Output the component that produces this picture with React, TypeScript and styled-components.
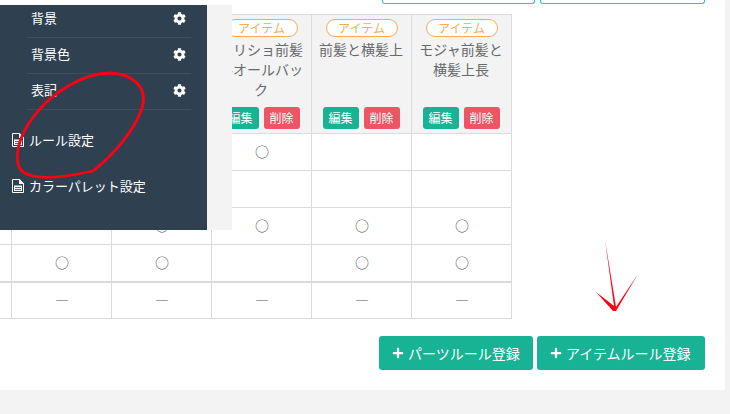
import React from 'react';
import styled, { createGlobalStyle } from 'styled-components';
import { FaCog, FaPlus } from 'react-icons/fa';

const GlobalStyle = createGlobalStyle`
  html, body {
    margin: 0;
    padding: 0;
    overflow: hidden;
    background: #f3f3f4;
    font-family: "Noto Sans CJK JP", "Open Sans", sans-serif;
    font-size: 14px;
    color: #676a6c;
  }
`;

const Page = styled.div`
  position: relative;
  width: 730px;
  height: 414px;
  overflow: hidden;
`;

const Panel = styled.main`
  width: 725px;
  height: 390px;
  background: #fff;
  overflow: hidden;
`;

const TopBar = styled.div`
  display: flex;
  justify-content: flex-end;
  gap: 5px;
  height: 4px;
  padding-right: 20px;
  margin-bottom: 10px;
`;

const CutButton = styled.div<{ $width: number }>`
  width: ${(p) => p.$width}px;
  box-sizing: border-box;
  border: 1px solid #23c6c8;
  border-top: none;
  border-radius: 0 0 3px 3px;
`;

const Table = styled.table`
  table-layout: fixed;
  border-collapse: collapse;
  width: 511px;
`;

const HeadCell = styled.th`
  height: 118px;
  padding: 0;
  background: #f3f3f3;
  border: 1px solid #dcdcdc;
  font-weight: 400;
  vertical-align: top;
  &:first-child {
    border-left: none;
  }
`;

const HeadInner = styled.div`
  display: flex;
  flex-direction: column;
  align-items: center;
  box-sizing: border-box;
  height: 118px;
  padding: 4px 7px;
`;

const Badge = styled.span`
  box-sizing: border-box;
  width: 72px;
  height: 18px;
  margin-left: 1px;
  border: 1px solid #f8ac59;
  border-radius: 9px;
  background: #fff;
  color: #f8ac59;
  font-size: 12px;
  line-height: 16px;
  text-align: center;
`;

const PartName = styled.div`
  margin-top: 2px;
  font-size: 14px;
  line-height: 20px;
  text-align: center;
  color: #676a6c;
`;

const HeadActions = styled.div`
  display: flex;
  gap: 5px;
  margin-top: auto;
`;

const SmallButton = styled.button<{ $danger?: boolean }>`
  width: 36px;
  height: 22px;
  padding: 0;
  border: none;
  border-radius: 3px;
  background: ${(p) => (p.$danger ? '#ed5565' : '#18b394')};
  color: #fff;
  font: inherit;
  font-size: 12px;
  line-height: 22px;
`;

const Cell = styled.td<{ $thick?: boolean }>`
  height: 37px;
  padding: 0 0 2px 2px;
  box-sizing: border-box;
  border: 1px solid #dcdcdc;
  border-bottom-width: ${(p) => (p.$thick ? 2 : 1)}px;
  text-align: center;
  font-size: 14px;
  line-height: 20px;
  color: #55585a;
  &:first-child {
    border-left: none;
  }
`;

const Footer = styled.div`
  display: flex;
  justify-content: flex-end;
  gap: 4px;
  margin-top: 17px;
  padding-right: 20px;
`;

const AddButton = styled.button<{ $width: number }>`
  display: flex;
  align-items: center;
  gap: 4px;
  box-sizing: border-box;
  width: ${(p) => p.$width}px;
  height: 34px;
  padding: 0 0 0 13px;
  border: none;
  border-radius: 3px;
  background: #18b394;
  color: #fff;
  font: inherit;
  font-size: 14px;
  white-space: nowrap;
`;

const SideWrap = styled.aside`
  position: absolute;
  top: 5px;
  left: 0;
  width: 232px;
  height: 225px;
  background: #f3f3f4;
`;

const Nav = styled.nav`
  width: 207px;
  height: 100%;
  background: #2f4050;
  color: #fff;
`;

const SubList = styled.ul`
  margin: 0;
  padding: 0 16px 0 27px;
  list-style: none;
`;

const SubItem = styled.li`
  display: flex;
  align-items: center;
  justify-content: space-between;
  box-sizing: border-box;
  height: 36px;
  padding: 0 5px 3px 4px;
  border-bottom: 1px solid #3e4d5c;
  font-size: 13px;
  &:first-child {
    height: 33px;
    padding-bottom: 6px;
  }
`;

const NavLabel = styled.span`
  padding-bottom: 2px;
`;

const NavLink = styled.a`
  display: flex;
  align-items: center;
  gap: 5px;
  height: 46px;
  padding-left: 12px;
  font-size: 13px;
  &:first-of-type {
    margin-top: 7px;
  }
`;

const Scribble = styled.svg`
  position: absolute;
  top: 0;
  left: 0;
  pointer-events: none;
`;

const FileIcon = () => (
  <svg width={12} height={14} viewBox="0 0 12 14">
    <path d="M.5 .5H7.5L11.5 4.5V13.5H.5V.5Z" fill="#2f4050" stroke="#fff" strokeWidth={1} />
    <path d="M7 .5V5H11.5V4L8 .5Z" fill="#fff" />
    <path d="M2 6.5H10V12H2Z" fill="#fff" />
    <path d="M3 8.5H9M3 10.5H9" stroke="#2f4050" strokeWidth={0.8} />
  </svg>
);

const ruleRows: { cells: string[]; thick?: boolean }[] = [
  { cells: ['', '', '', '○', '', ''] },
  { cells: ['', '', '', '', '', ''] },
  { cells: ['', '', '○', '○', '○', '○'] },
  { cells: ['', '○', '○', '', '○', '○'], thick: true },
  { cells: ['', '―', '―', '―', '―', '―'] },
];

const partNames = ['', '', '', 'エリショ前髪ルオールバック', '前髪と横髪上', 'モジャ前髪と横髪上長'];

export default function App() {
  return (
    <Page>
      <GlobalStyle />
      <Panel>
        <TopBar>
          <CutButton $width={153} />
          <CutButton $width={165} />
        </TopBar>
        <Table>
          <colgroup>
            <col style={{ width: 11 }} />
            {[1, 2, 3, 4, 5].map((n) => (
              <col key={n} style={{ width: 100 }} />
            ))}
          </colgroup>
          <thead>
            <tr>
              {partNames.map((name, i) => (
                <HeadCell key={i}>
                  {name && (
                    <HeadInner>
                      <Badge>アイテム</Badge>
                      <PartName>{name}</PartName>
                      <HeadActions>
                        <SmallButton>編集</SmallButton>
                        <SmallButton $danger>削除</SmallButton>
                      </HeadActions>
                    </HeadInner>
                  )}
                </HeadCell>
              ))}
            </tr>
          </thead>
          <tbody>
            {ruleRows.map((row, r) => (
              <tr key={r}>
                {row.cells.map((c, i) => (
                  <Cell key={i} $thick={row.thick}>
                    {c}
                  </Cell>
                ))}
              </tr>
            ))}
          </tbody>
        </Table>
        <Footer>
          <AddButton $width={154}>
            <FaPlus size={12} />
            パーツルール登録
          </AddButton>
          <AddButton $width={168}>
            <FaPlus size={12} />
            アイテムルール登録
          </AddButton>
        </Footer>
      </Panel>

      <SideWrap>
        <Nav>
          <SubList>
            {['背景', '背景色', '表記'].map((label) => (
              <SubItem key={label}>
                <NavLabel>{label}</NavLabel>
                <FaCog size={13} />
              </SubItem>
            ))}
          </SubList>
          <NavLink>
            <FileIcon />
            <NavLabel>ルール設定</NavLabel>
          </NavLink>
          <NavLink>
            <FileIcon />
            <NavLabel>カラーパレット設定</NavLabel>
          </NavLink>
        </Nav>
      </SideWrap>

      <Scribble width={730} height={414} viewBox="0 0 730 414">
        <path
          d="M93 171 C112 156 134 132 142 108 C148 88 134 74 110 73 C84 73 52 92 34 116 C20 134 14 154 19 167 C25 179 48 181 93 171 Z"
          fill="none"
          stroke="#ff0012"
          strokeWidth={2.8}
        />
        <path
          d="M605 240 L616 307 L638 274 L616 311 L613 311 L596 292 L614 306 Z"
          fill="#ff0012"
        />
      </Scribble>
    </Page>
  );
}
